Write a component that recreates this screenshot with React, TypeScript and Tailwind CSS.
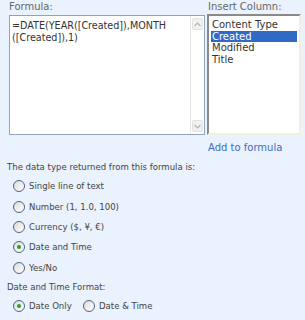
import React from "react";

const Radio = ({ checked }: { checked?: boolean }) => (
  <span className="w-[12px] h-[12px] rounded-full border border-[#4f6384] bg-gradient-to-br from-[#dcdcd6] to-white flex items-center justify-center shrink-0">
    {checked && <span className="w-[4px] h-[4px] rounded-full bg-[#2a9f2a]" />}
  </span>
);

const Chevron = ({ up }: { up?: boolean }) => (
  <svg width="7" height="5" viewBox="0 0 7 5">
    <path d={up ? "M0.5 4 L3.5 1 L6.5 4" : "M0.5 1 L3.5 4 L6.5 1"} stroke="#b6b6b6" strokeWidth="1.2" fill="none" />
  </svg>
);

const types = [
  { label: "Single line of text" },
  { label: "Number (1, 1.0, 100)" },
  { label: "Currency ($, ¥, €)" },
  { label: "Date and Time", checked: true },
  { label: "Yes/No" },
];

export default function App() {
  return (
    <div className="w-[305px] h-[320px] bg-[#eaf2fd] overflow-hidden text-[10px] leading-[12px]" style={{ fontFamily: '"DejaVu Sans", sans-serif' }}>
      {/* formula + insert column */}
      <div className="flex pl-[9px] pt-[1px]">
        <div className="w-[196px]">
          <div className="text-[#666] h-[14px] leading-[12px]">Formula:</div>
          <div className="h-[120px] border border-[#8fa4bd] bg-white flex">
            <div className="flex-1 pl-[2px] pt-[4px] text-[#333] text-[9.6px] leading-[11.5px]">
              =DATE(YEAR([Created]),MONTH
              <br />
              ([Created]),1)
            </div>
            <div className="w-[14px] border-l border-[#e3e6ea] flex flex-col justify-between py-[2px] pr-[1px]">
              <div className="h-[12px] ml-[1px] rounded-[2px] bg-[#f1f1f1] border border-[#e2e2e2] flex items-center justify-center">
                <Chevron up />
              </div>
              <div className="h-[12px] ml-[1px] rounded-[2px] bg-[#f1f1f1] border border-[#e2e2e2] flex items-center justify-center">
                <Chevron />
              </div>
            </div>
          </div>
        </div>
        <div className="ml-[2px] w-[94px]">
          <div className="text-[#666] h-[13px] pl-[1px] leading-[12px]">Insert Column:</div>
          <div className="h-[121px] border-t-2 border-l-2 border-t-[#8a8a8a] border-l-[#8a8a8a] border-r-2 border-b-2 border-r-[#f1efe2] border-b-[#f1efe2] bg-white pt-[3px] px-[2px] text-[#333]">
            <div className="h-[11.5px] leading-[11px] pl-[1px]">Content Type</div>
            <div className="h-[11.5px] leading-[11px] pl-[1px] bg-[#316ac5] text-white">Created</div>
            <div className="h-[11.5px] leading-[12px] pl-[1px]">Modified</div>
            <div className="h-[11.5px] leading-[12px] pl-[1px]">Title</div>
          </div>
        </div>
      </div>

      <div className="pl-[208px] pt-[7px] h-[24px] text-[#3e6cc0]">Add to formula</div>

      {/* data type */}
      <div className="pl-[7px] text-[#444] text-[9.5px]" style={{ fontFamily: '"DejaVu Sans Condensed", "DejaVu Sans", sans-serif' }}>
        <div className="h-[14px] leading-[14px] mt-[1px]">The data type returned from this formula is:</div>
        <div className="pl-[6px] pt-[2px]">
          {types.map((t) => (
            <div key={t.label} className="h-[20.4px] flex items-center gap-[4px]">
              <Radio checked={t.checked} />
              <span>{t.label}</span>
            </div>
          ))}
        </div>
        <div className="h-[14px] leading-[14px] mt-[2px]">Date and Time Format:</div>
        <div className="pl-[6px] h-[20px] mt-[2px] flex items-center">
          <Radio checked />
          <span className="ml-[4px] w-[54px]">Date Only</span>
          <Radio />
          <span className="ml-[4px]">Date &amp; Time</span>
        </div>
      </div>
    </div>
  );
}
